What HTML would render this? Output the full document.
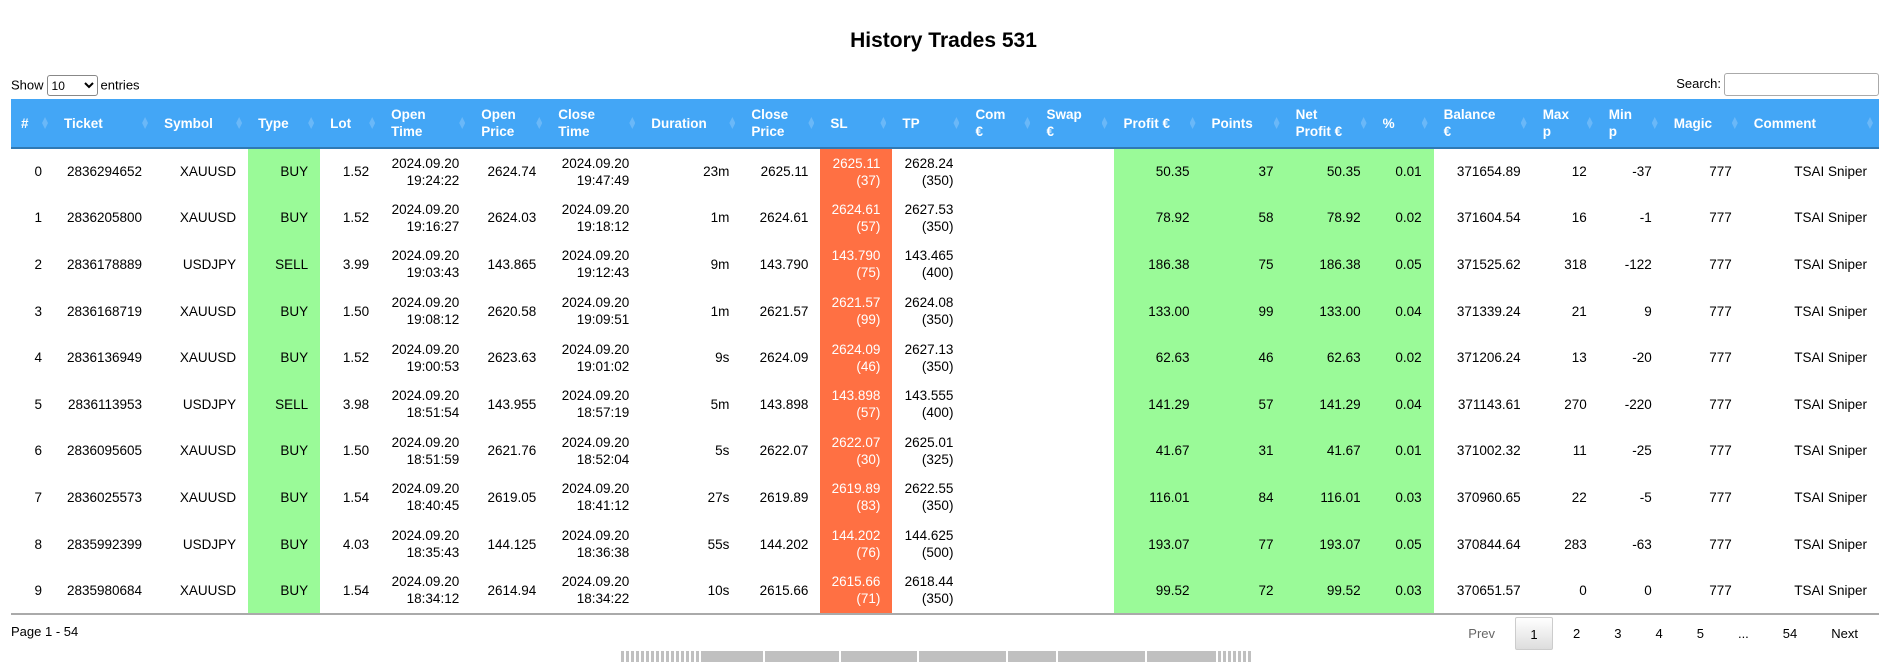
<!DOCTYPE html>
<html><head><meta charset="utf-8"><style>
body{margin:0;width:1887px;height:662px;overflow:hidden;background:#fff;font-family:"Liberation Sans",Arial,sans-serif;color:#000;position:relative}
h1{position:absolute;top:29px;left:0;width:1887px;text-align:center;font-size:21px;font-weight:bold;margin:0}
.show{position:absolute;left:11px;top:75px;font-size:13px}
.show select{width:51px;height:21px;font-size:12px;margin:0 3px;border:1px solid #888;border-radius:3px;background:#fff}
.search{position:absolute;right:8px;top:73px;font-size:13px}
.search input{width:153px;height:21px;border:1px solid #aaa;border-radius:3px;vertical-align:middle;margin-left:3px;padding:0}
table{position:absolute;left:11px;top:99px;border-collapse:collapse;table-layout:fixed;width:1868px}
th{background:#43a6f6;color:#fff;font-weight:bold;font-size:13.5px;text-align:left;height:49px;padding:0 0 0 10px;line-height:17px;position:relative;border-bottom:2px solid #2f79b4;box-sizing:border-box}
th:after{content:"";position:absolute;right:6px;top:18px;width:6px;height:12px;background:#6ab8f8;clip-path:polygon(50% 0,100% 50%,50% 100%,0 50%)}
td{font-family:"Liberation Sans Narrow","Liberation Sans",sans-serif;font-size:13.5px;text-align:right;padding:0 12px 0 0;height:46.6px;line-height:17px;box-sizing:border-box}
.g{background:#9afa98}.r{background:#ff7043;color:#fff}
tr:last-child td{border-bottom:2px solid #aaa}
.pg{position:absolute;left:11px;top:624px;font-size:13px}
.pn{position:absolute;top:617px;right:12px;display:flex;font-size:13px}
.pn span{height:33px;line-height:33px;padding:0 17px}
.pn .a{border:1px solid #ccc;background:linear-gradient(#fff,#ddd);border-radius:2px;box-sizing:border-box;width:38px;padding:0;text-align:center;margin:0 3px}
.strip{position:absolute;left:621px;top:651px;height:11px;display:flex;gap:2px}
.strip div{background:#c0c0c0;height:11px}
.strip .t{width:3px}
</style></head><body>
<h1>History Trades 531</h1>
<div class="show">Show<select><option>10</option></select>entries</div>
<div class="search">Search:<input></div>
<table>
<colgroup><col style="width:43px"><col style="width:100px"><col style="width:94px"><col style="width:72px"><col style="width:61px"><col style="width:90px"><col style="width:77px"><col style="width:93px"><col style="width:100px"><col style="width:79px"><col style="width:72px"><col style="width:73px"><col style="width:71px"><col style="width:77px"><col style="width:88px"><col style="width:84px"><col style="width:87px"><col style="width:61px"><col style="width:99px"><col style="width:66px"><col style="width:65px"><col style="width:80px"><col style="width:135px"></colgroup>
<tr><th>#</th><th>Ticket</th><th>Symbol</th><th>Type</th><th>Lot</th><th>Open<br>Time</th><th>Open<br>Price</th><th>Close<br>Time</th><th>Duration</th><th>Close<br>Price</th><th>SL</th><th>TP</th><th>Com<br>€</th><th>Swap<br>€</th><th>Profit €</th><th>Points</th><th>Net<br>Profit €</th><th>%</th><th>Balance<br>€</th><th>Max<br>p</th><th>Min<br>p</th><th>Magic</th><th>Comment</th></tr>
<tr><td>0</td><td>2836294652</td><td>XAUUSD</td><td class="g">BUY</td><td>1.52</td><td>2024.09.20<br>19:24:22</td><td>2624.74</td><td>2024.09.20<br>19:47:49</td><td>23m</td><td>2625.11</td><td class="r">2625.11<br>(37)</td><td>2628.24<br>(350)</td><td></td><td></td><td class="g">50.35</td><td class="g">37</td><td class="g">50.35</td><td class="g">0.01</td><td>371654.89</td><td>12</td><td>-37</td><td>777</td><td>TSAI Sniper</td></tr>
<tr><td>1</td><td>2836205800</td><td>XAUUSD</td><td class="g">BUY</td><td>1.52</td><td>2024.09.20<br>19:16:27</td><td>2624.03</td><td>2024.09.20<br>19:18:12</td><td>1m</td><td>2624.61</td><td class="r">2624.61<br>(57)</td><td>2627.53<br>(350)</td><td></td><td></td><td class="g">78.92</td><td class="g">58</td><td class="g">78.92</td><td class="g">0.02</td><td>371604.54</td><td>16</td><td>-1</td><td>777</td><td>TSAI Sniper</td></tr>
<tr><td>2</td><td>2836178889</td><td>USDJPY</td><td class="g">SELL</td><td>3.99</td><td>2024.09.20<br>19:03:43</td><td>143.865</td><td>2024.09.20<br>19:12:43</td><td>9m</td><td>143.790</td><td class="r">143.790<br>(75)</td><td>143.465<br>(400)</td><td></td><td></td><td class="g">186.38</td><td class="g">75</td><td class="g">186.38</td><td class="g">0.05</td><td>371525.62</td><td>318</td><td>-122</td><td>777</td><td>TSAI Sniper</td></tr>
<tr><td>3</td><td>2836168719</td><td>XAUUSD</td><td class="g">BUY</td><td>1.50</td><td>2024.09.20<br>19:08:12</td><td>2620.58</td><td>2024.09.20<br>19:09:51</td><td>1m</td><td>2621.57</td><td class="r">2621.57<br>(99)</td><td>2624.08<br>(350)</td><td></td><td></td><td class="g">133.00</td><td class="g">99</td><td class="g">133.00</td><td class="g">0.04</td><td>371339.24</td><td>21</td><td>9</td><td>777</td><td>TSAI Sniper</td></tr>
<tr><td>4</td><td>2836136949</td><td>XAUUSD</td><td class="g">BUY</td><td>1.52</td><td>2024.09.20<br>19:00:53</td><td>2623.63</td><td>2024.09.20<br>19:01:02</td><td>9s</td><td>2624.09</td><td class="r">2624.09<br>(46)</td><td>2627.13<br>(350)</td><td></td><td></td><td class="g">62.63</td><td class="g">46</td><td class="g">62.63</td><td class="g">0.02</td><td>371206.24</td><td>13</td><td>-20</td><td>777</td><td>TSAI Sniper</td></tr>
<tr><td>5</td><td>2836113953</td><td>USDJPY</td><td class="g">SELL</td><td>3.98</td><td>2024.09.20<br>18:51:54</td><td>143.955</td><td>2024.09.20<br>18:57:19</td><td>5m</td><td>143.898</td><td class="r">143.898<br>(57)</td><td>143.555<br>(400)</td><td></td><td></td><td class="g">141.29</td><td class="g">57</td><td class="g">141.29</td><td class="g">0.04</td><td>371143.61</td><td>270</td><td>-220</td><td>777</td><td>TSAI Sniper</td></tr>
<tr><td>6</td><td>2836095605</td><td>XAUUSD</td><td class="g">BUY</td><td>1.50</td><td>2024.09.20<br>18:51:59</td><td>2621.76</td><td>2024.09.20<br>18:52:04</td><td>5s</td><td>2622.07</td><td class="r">2622.07<br>(30)</td><td>2625.01<br>(325)</td><td></td><td></td><td class="g">41.67</td><td class="g">31</td><td class="g">41.67</td><td class="g">0.01</td><td>371002.32</td><td>11</td><td>-25</td><td>777</td><td>TSAI Sniper</td></tr>
<tr><td>7</td><td>2836025573</td><td>XAUUSD</td><td class="g">BUY</td><td>1.54</td><td>2024.09.20<br>18:40:45</td><td>2619.05</td><td>2024.09.20<br>18:41:12</td><td>27s</td><td>2619.89</td><td class="r">2619.89<br>(83)</td><td>2622.55<br>(350)</td><td></td><td></td><td class="g">116.01</td><td class="g">84</td><td class="g">116.01</td><td class="g">0.03</td><td>370960.65</td><td>22</td><td>-5</td><td>777</td><td>TSAI Sniper</td></tr>
<tr><td>8</td><td>2835992399</td><td>USDJPY</td><td class="g">BUY</td><td>4.03</td><td>2024.09.20<br>18:35:43</td><td>144.125</td><td>2024.09.20<br>18:36:38</td><td>55s</td><td>144.202</td><td class="r">144.202<br>(76)</td><td>144.625<br>(500)</td><td></td><td></td><td class="g">193.07</td><td class="g">77</td><td class="g">193.07</td><td class="g">0.05</td><td>370844.64</td><td>283</td><td>-63</td><td>777</td><td>TSAI Sniper</td></tr>
<tr><td>9</td><td>2835980684</td><td>XAUUSD</td><td class="g">BUY</td><td>1.54</td><td>2024.09.20<br>18:34:12</td><td>2614.94</td><td>2024.09.20<br>18:34:22</td><td>10s</td><td>2615.66</td><td class="r">2615.66<br>(71)</td><td>2618.44<br>(350)</td><td></td><td></td><td class="g">99.52</td><td class="g">72</td><td class="g">99.52</td><td class="g">0.03</td><td>370651.57</td><td>0</td><td>0</td><td>777</td><td>TSAI Sniper</td></tr>
</table>
<div class="pg">Page 1 - 54</div>
<div class="pn"><span style="color:#666">Prev</span><span class="a">1</span><span>2</span><span>3</span><span>4</span><span>5</span><span>...</span><span>54</span><span>Next</span></div>
<div class="strip"><div class="t"></div><div class="t"></div><div class="t"></div><div class="t"></div><div class="t"></div><div class="t"></div><div class="t"></div><div class="t"></div><div class="t"></div><div class="t"></div><div class="t"></div><div class="t"></div><div class="t"></div><div class="t"></div><div class="t"></div><div class="t"></div><div style="width:62px"></div><div style="width:74px"></div><div style="width:76px"></div><div style="width:87px"></div><div style="width:48px"></div><div style="width:87px"></div><div style="width:69px"></div><div class="t"></div><div class="t"></div><div class="t"></div><div class="t"></div><div class="t"></div><div class="t"></div><div class="t"></div></div>
</body></html>
